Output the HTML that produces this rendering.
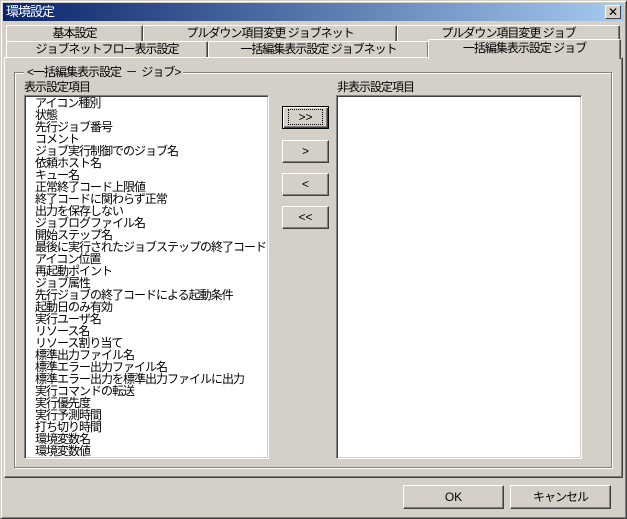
<!DOCTYPE html>
<html><head><meta charset="utf-8"><style>
*{margin:0;padding:0;box-sizing:border-box}
body{width:627px;height:519px;background:#d4d0c8;font-family:"Liberation Sans","Noto Sans CJK JP",sans-serif;font-size:12px;letter-spacing:-1px;color:#000;position:relative;overflow:hidden}
.a{position:absolute}
.win{left:0;top:0;width:627px;height:519px;border:1px solid;border-color:#d4d0c8 #404040 #404040 #d4d0c8;box-shadow:inset 1px 1px #fff,inset -1px -1px #808080}
.title{left:3px;top:3px;width:621px;height:18px;background:linear-gradient(90deg,#0a246a,#a6caf0);color:#fff;font-size:13px;line-height:18px;padding-left:3px}
.close{left:605px;top:5px;width:16px;height:14px;background:#d4d0c8;border:1px solid;border-color:#fff #404040 #404040 #fff;font-size:12px;line-height:12px;text-align:center;color:#000;letter-spacing:0}
.tab{border:1px solid;border-color:#fff #404040 transparent #fff;border-bottom:none;border-radius:2px 2px 0 0;text-align:center;font-size:12px;line-height:15px;background:#d4d0c8;box-shadow:inset -1px 0 #808080}
.panel{left:4px;top:57px;width:619px;height:421px;border:1px solid;border-color:#fff #404040 #404040 #fff;box-shadow:inset -1px -1px #808080}
.grp{left:14px;top:72px;width:598px;height:396px;border:1px solid #808080;box-shadow:1px 1px #fff,inset 1px 1px #fff}
.list{background:#fff;border:1px solid;border-color:#808080 #fff #fff #808080;box-shadow:inset 1px 1px #404040,inset -1px -1px #d4d0c8}
.btn{background:#d4d0c8;border:1px solid;border-color:#fff #404040 #404040 #fff;box-shadow:inset -1px -1px #808080;text-align:center;font-size:12px;letter-spacing:0}
.items{left:35px;top:97px;line-height:12px;font-size:12px;white-space:nowrap}
</style></head><body>
<div class="a win"></div>
<div class="a title">環境設定</div>
<div class="a close">✕</div>

<div class="a tab" style="left:6px;top:25px;width:137px;height:17px">基本設定</div>
<div class="a tab" style="left:143px;top:25px;width:254px;height:17px">プルダウン項目変更 ジョブネット</div>
<div class="a tab" style="left:397px;top:25px;width:223px;height:17px">プルダウン項目変更 ジョブ</div>
<div class="a tab" style="left:6px;top:41px;width:202px;height:17px">ジョブネットフロー表示設定</div>
<div class="a tab" style="left:208px;top:41px;width:221px;height:17px">一括編集表示設定 ジョブネット</div>
<div class="a panel"></div>
<div class="a tab" style="left:428px;top:39px;width:193px;height:20px;border-bottom:none;z-index:2;line-height:16px">一括編集表示設定 ジョブ</div>

<div class="a grp"></div>
<div class="a" style="left:24px;top:65px;background:#d4d0c8;padding:0 3px;line-height:14px">&lt;一括編集表示設定 &nbsp;－ &nbsp;ジョブ&gt;</div>
<div class="a" style="left:24px;top:80px;line-height:14px">表示設定項目</div>
<div class="a" style="left:337px;top:80px;line-height:14px">非表示設定項目</div>
<div class="a list" style="left:24px;top:95px;width:245px;height:364px"></div>
<div class="a list" style="left:336px;top:95px;width:246px;height:364px"></div>
<div class="a items">アイコン種別<br>状態<br>先行ジョブ番号<br>コメント<br>ジョブ実行制御でのジョブ名<br>依頼ホスト名<br>キュー名<br>正常終了コード上限値<br>終了コードに関わらず正常<br>出力を保存しない<br>ジョブログファイル名<br>開始ステップ名<br>最後に実行されたジョブステップの終了コード<br>アイコン位置<br>再起動ポイント<br>ジョブ属性<br>先行ジョブの終了コードによる起動条件<br>起動日のみ有効<br>実行ユーザ名<br>リソース名<br>リソース割り当て<br>標準出力ファイル名<br>標準エラー出力ファイル名<br>標準エラー出力を標準出力ファイルに出力<br>実行コマンドの転送<br>実行優先度<br>実行予測時間<br>打ち切り時間<br>環境変数名<br>環境変数値</div>

<div class="a btn" style="left:282px;top:106px;width:47px;height:23px;border:1px solid #000;box-shadow:inset 1px 1px #fff,inset -1px -1px #404040,inset -2px -2px #808080;line-height:20px"><span style="outline:1px dotted #000;outline-offset:0;padding:0 9px">&gt;&gt;</span></div>
<div class="a btn" style="left:282px;top:140px;width:47px;height:23px;line-height:21px">&gt;</div>
<div class="a btn" style="left:282px;top:173px;width:47px;height:23px;line-height:21px">&lt;</div>
<div class="a btn" style="left:282px;top:206px;width:47px;height:23px;line-height:21px">&lt;&lt;</div>

<div class="a btn" style="left:403px;top:485px;width:101px;height:24px;line-height:22px">OK</div>
<div class="a btn" style="left:510px;top:485px;width:101px;height:24px;line-height:22px;letter-spacing:-1px">キャンセル</div>
</body></html>
